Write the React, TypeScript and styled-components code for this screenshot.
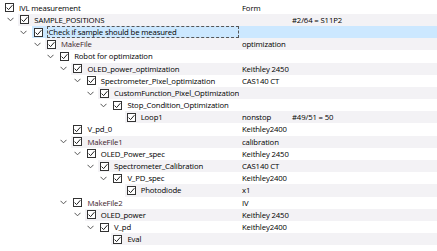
import React from "react";
import styled, { createGlobalStyle } from "styled-components";

const GlobalStyle = createGlobalStyle`
  html, body {
    margin: 0;
    padding: 0;
    background: #ffffff;
  }
  body {
    font-family: "Open Sans", "Noto Sans", "Liberation Sans", sans-serif;
    font-size: 7.75px;
    letter-spacing: -0.14px;
    color: #000;
  }
`;

const INDENT = 13.3;
const ROW_H = 12.2;
const NAME_W = 239;
const ALT = "#f3f2f5";
const SEL = "#cce8ff";

type Node = {
  level: number;
  label: string;
  branch?: boolean;
  value?: string;
  extra?: string;
  selected?: boolean;
  tint?: boolean;
};

const nodes: Node[] = [
  { level: 0, label: "IVL measurement", value: "Form" },
  { level: 1, label: "SAMPLE_POSITIONS", branch: true, extra: "#2/64 = S11P2" },
  { level: 2, label: "Check if sample should be measured", branch: true, selected: true },
  { level: 3, label: "MakeFile", branch: true, value: "optimization", tint: true },
  { level: 4, label: "Robot for optimization", branch: true },
  { level: 5, label: "OLED_power_optimization", branch: true, value: "Keithley 2450" },
  { level: 6, label: "Spectrometer_Pixel_optimization", branch: true, value: "CAS140 CT" },
  { level: 7, label: "CustomFunction_Pixel_Optimization", branch: true },
  { level: 8, label: "Stop_Condition_Optimization", branch: true },
  { level: 9, label: "Loop1", value: "nonstop", extra: "#49/51 = 50" },
  { level: 5, label: "V_pd_0", value: "Keithley2400" },
  { level: 5, label: "MakeFile1", branch: true, value: "calibration", tint: true },
  { level: 6, label: "OLED_Power_spec", branch: true, value: "Keithley 2450" },
  { level: 7, label: "Spectrometer_Calibration", branch: true, value: "CAS140 CT" },
  { level: 8, label: "V_PD_spec", branch: true, value: "Keithley2400" },
  { level: 9, label: "Photodiode", value: "x1" },
  { level: 5, label: "MakeFile2", branch: true, value: "IV", tint: true },
  { level: 6, label: "OLED_power", branch: true, value: "Keithley 2450" },
  { level: 7, label: "V_pd", branch: true, value: "Keithley2400" },
  { level: 8, label: "Eval" },
];

const Tree = styled.div`
  width: 437px;
  height: 251px;
  padding-top: 1.6px;
  box-sizing: border-box;
  overflow: hidden;
  background: #fff;
`;

const Row = styled.div<{ $alt: boolean; $selected: boolean }>`
  display: grid;
  grid-template-columns: ${NAME_W}px 50px 1fr;
  height: ${ROW_H}px;
  line-height: ${ROW_H}px;
  white-space: nowrap;
  background: ${(p) =>
    p.$selected
      ? `linear-gradient(to right, transparent ${NAME_W}px, ${SEL} ${NAME_W}px)`
      : p.$alt
      ? `linear-gradient(to right, transparent ${NAME_W}px, ${ALT} ${NAME_W}px)`
      : "transparent"};
`;

const NameCell = styled.div<{ $level: number }>`
  display: flex;
  align-items: stretch;
  padding-left: ${(p) => (p.$level === 0 ? 3 : 5 + (p.$level - 1) * INDENT)}px;
  overflow: hidden;
`;

const BranchBox = styled.div`
  flex: 0 0 ${INDENT - 2}px;
  display: flex;
  align-items: center;
  padding-left: 2px;
`;

const Item = styled.div<{ $alt: boolean; $selected: boolean }>`
  flex: 1;
  display: flex;
  align-items: center;
  padding-left: 2px;
  min-width: 0;
  background: ${(p) => (p.$selected ? SEL : p.$alt ? ALT : "transparent")};
`;

const Box = styled.span`
  flex: 0 0 auto;
  width: 9px;
  height: 9px;
  box-sizing: border-box;
  border: 1px solid #333;
  background: #fff;
  display: flex;
  align-items: center;
  justify-content: center;
  margin-right: 4px;
`;

const Label = styled.span<{ $focus: boolean; $tint: boolean }>`
  flex: 1;
  height: 100%;
  display: flex;
  align-items: center;
  box-sizing: border-box;
  padding-left: 1px;
  color: ${(p) => (p.$tint ? "#3c1c2a" : "#000")};
  border: ${(p) => (p.$focus ? "1px dashed #555" : "none")};
  overflow: hidden;
`;

const ValueCell = styled.div`
  padding-left: 3px;
  overflow: visible;
  color: #000;
`;

function Chevron() {
  return (
    <svg width="7" height="5" viewBox="0 0 7 5">
      <path d="M0.5 0.8 L3.5 3.8 L6.5 0.8" fill="none" stroke="#555" strokeWidth="1" />
    </svg>
  );
}

function Check() {
  return (
    <svg width="7" height="7" viewBox="0 0 7 7">
      <path d="M0.6 3.6 L2.6 5.6 L6.4 1.2" fill="none" stroke="#222" strokeWidth="1" />
    </svg>
  );
}

function TreeRow({ node, index }: { node: Node; index: number }) {
  const alt = index % 2 === 1;
  const sel = !!node.selected;
  return (
    <Row $alt={alt} $selected={sel}>
      <NameCell $level={node.level}>
        {node.level > 0 && <BranchBox>{node.branch && <Chevron />}</BranchBox>}
        <Item $alt={alt} $selected={sel}>
          <Box>
            <Check />
          </Box>
          <Label $focus={sel} $tint={!!node.tint}>
            {node.label}
          </Label>
        </Item>
      </NameCell>
      <ValueCell>{node.value}</ValueCell>
      <ValueCell>{node.extra}</ValueCell>
    </Row>
  );
}

export default function App() {
  return (
    <>
      <GlobalStyle />
      <Tree>
        {nodes.map((n, i) => (
          <TreeRow key={i} node={n} index={i} />
        ))}
      </Tree>
    </>
  );
}
